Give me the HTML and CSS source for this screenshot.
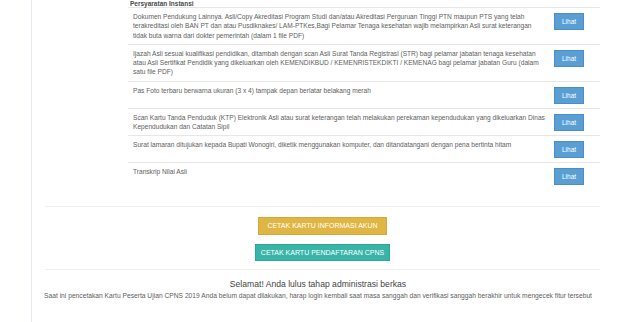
FILE: index.html
```html
<!DOCTYPE html>
<html lang="id">
<head>
<meta charset="utf-8">
<title>Persyaratan Instansi</title>
<link rel="stylesheet" href="styles.css">
</head>
<body>
<div class="page">
  <div class="req">
    <h4 class="req-title">Persyaratan Instansi</h4>
    <table class="req-table">
      <tr>
        <td class="desc">Dokumen Pendukung Lainnya. Asli/Copy Akreditasi Program Studi dan/atau Akreditasi Perguruan Tinggi PTN maupun PTS yang telah terakreditasi oleh BAN PT dan atau Pusdiknakes/ LAM-PTKes,Bagi Pelamar Tenaga kesehatan wajib melampirkan Asli surat keterangan tidak buta warna dari dokter pemerintah (dalam 1 file PDF)</td>
        <td class="act"><span class="btn-lihat">Lihat</span></td>
      </tr>
      <tr>
        <td class="desc">Ijazah Asli sesuai kualifikasi pendidikan, ditambah dengan scan Asli Surat Tanda Registrasi (STR) bagi pelamar jabatan tenaga kesehatan atau Asli Sertifikat Pendidik yang dikeluarkan oleh KEMENDIKBUD / KEMENRISTEKDIKTI / KEMENAG bagi pelamar jabatan Guru (dalam satu file PDF)</td>
        <td class="act"><span class="btn-lihat">Lihat</span></td>
      </tr>
      <tr>
        <td class="desc">Pas Foto terbaru berwarna ukuran (3 x 4) tampak depan berlatar belakang merah</td>
        <td class="act"><span class="btn-lihat">Lihat</span></td>
      </tr>
      <tr>
        <td class="desc">Scan Kartu Tanda Penduduk (KTP) Elektronik Asli atau surat keterangan telah melakukan perekaman kependudukan yang dikeluarkan Dinas Kependudukan dan Catatan Sipil</td>
        <td class="act"><span class="btn-lihat">Lihat</span></td>
      </tr>
      <tr>
        <td class="desc">Surat lamaran ditujukan kepada Bupati Wonogiri, diketik menggunakan komputer, dan ditandatangani dengan pena bertinta hitam</td>
        <td class="act"><span class="btn-lihat">Lihat</span></td>
      </tr>
      <tr class="last">
        <td class="desc">Transkrip Nilai Asli</td>
        <td class="act"><span class="btn-lihat">Lihat</span></td>
      </tr>
    </table>
  </div>

  <div class="actions">
    <span class="btn-cetak btn-gold">CETAK KARTU INFORMASI AKUN</span>
    <span class="btn-cetak btn-teal">CETAK KARTU PENDAFTARAN CPNS</span>
  </div>

  <div class="notice">
    <h3 class="notice-title">Selamat! Anda lulus tahap administrasi berkas</h3>
    <p class="notice-text">Saat ini pencetakan Kartu Peserta Ujian CPNS 2019 Anda belum dapat dilakukan, harap login kembali saat masa sanggah dan verifikasi sanggah berakhir untuk mengecek fitur tersebut</p>
  </div>
</div>
</body>
</html>
```

FILE: styles.css
```css
html, body {
  margin: 0;
  padding: 0;
  background: #ffffff;
}

body {
  font-family: "Liberation Sans", Arial, sans-serif;
  color: #5e5e5e;
}

.page {
  margin-left: 31px;
  border-left: 1px solid #e6eaee;
  min-height: 322px;
  padding-right: 40px;
}

.req {
  margin: 0 4px 0 96px;
}

.req-title {
  margin: 0;
  padding-left: 2px;
  font-size: 6.5px;
  line-height: 7px;
  font-weight: bold;
  color: #4a4a4a;
}

.req-table {
  width: 100%;
  border-collapse: collapse;
  table-layout: fixed;
}

.req-table td {
  border-top: 1px solid #e6e6e6;
  padding: 4px 5px;
  vertical-align: top;
  font-size: 6.6px;
  line-height: 9.3px;
}

.req-table .desc {
  padding-right: 4px;
}

.req-table .act {
  width: 41px;
  padding-left: 5px;
  padding-right: 5px;
}

.btn-lihat {
  display: inline-block;
  background: #5a9fd4;
  border: 1px solid #4b8ec4;
  color: #ffffff;
  font-size: 6.5px;
  line-height: 9px;
  padding: 3px 7px;
  margin-top: 1px;
}

.actions {
  margin: 17px 4px 0 13px;
  border-top: 1px solid #f1f1f1;
  border-bottom: 1px solid #efefef;
  padding: 10px 0 8px;
  display: flex;
  flex-direction: column;
  align-items: center;
  gap: 9px;
}

.btn-cetak {
  display: inline-block;
  color: #ffffff;
  font-size: 7px;
  line-height: 9.3px;
  padding: 3px 5px;
  border: 1px solid transparent;
}

.btn-gold {
  background: #dfb543;
  border-color: #d4a93a;
  padding-left: 8px;
  padding-right: 8px;
}

.btn-teal {
  background: #39b4a8;
  border-color: #2fa699;
}

.notice {
  text-align: center;
  padding-top: 8px;
}

.notice-title {
  margin: 0;
  font-size: 8.6px;
  line-height: 12px;
  font-weight: normal;
  color: #444444;
}

.notice-text {
  margin: 1px 0 0;
  font-size: 6.7px;
  line-height: 9.3px;
  color: #5e5e5e;
}
```
